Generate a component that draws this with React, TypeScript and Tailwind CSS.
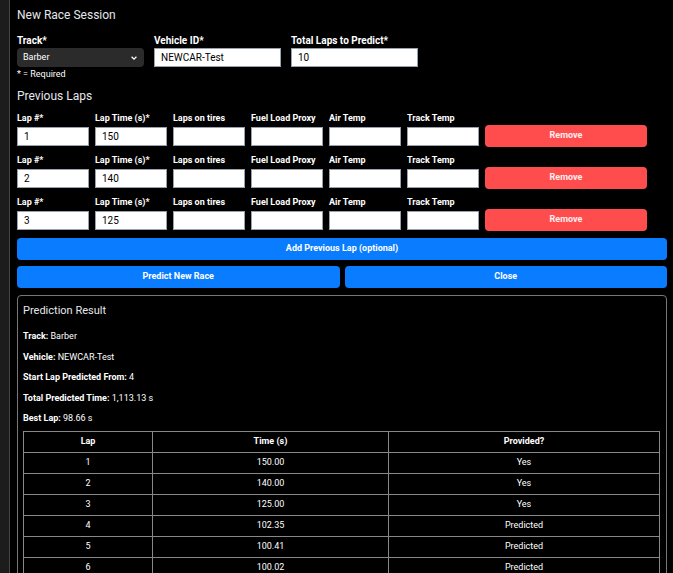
import React from "react";

const F = { fontFamily: "Roboto, 'Liberation Sans', sans-serif" };
const inp = "h-[19px] bg-white text-black text-[10px] px-1.5 border border-gray-400 outline-none";
const labels = ["Lap #*", "Lap Time (s)*", "Laps on tires", "Fuel Load Proxy", "Air Temp", "Track Temp"];
const laps = [["1", "150"], ["2", "140"], ["3", "125"]];
const rows = [
  ["1", "150.00", "Yes"], ["2", "140.00", "Yes"], ["3", "125.00", "Yes"],
  ["4", "102.35", "Predicted"], ["5", "100.41", "Predicted"], ["6", "100.02", "Predicted"],
];

export default function App() {
  return (
    <div className="flex w-[673px] h-[573px] overflow-hidden bg-black text-white" style={F}>
      <div className="w-[10px] bg-[#1c1c1c] border-r border-[#444]" />
      <div className="flex-1 pl-[7px] pr-[6px]">
        <div className="text-[12px] mt-[6px] text-gray-200">New Race Session</div>
        <div className="flex gap-[10px] mt-[9px]">
          {["Track*", "Vehicle ID*", "Total Laps to Predict*"].map((l, i) => (
            <div key={i} className="flex flex-col w-[127px]">
              <div className="text-[10px] font-bold h-[12px]">{l}</div>
              {i === 0 ? (
                <div className="mt-[3px] h-[19px] bg-[#2b2b2b] rounded flex items-center justify-between px-1.5 text-[9px]">
                  <span>Barber</span>
                  <svg width="8" height="8" viewBox="0 0 10 10"><path d="M2 3.5l3 3 3-3" stroke="white" strokeWidth="1.6" fill="none" /></svg>
                </div>
              ) : (
                <input readOnly value={i === 1 ? "NEWCAR-Test" : "10"} className={inp + " mt-[3px]"} />
              )}
            </div>
          ))}
        </div>
        <div className="text-[9px] mt-[1px]">* = Required</div>
        <div className="text-[12px] mt-[5px] text-gray-200">Previous Laps</div>
        <div className="flex flex-col mt-[7px] gap-[8px]">
          {laps.map(([a, b], r) => (
            <div key={r} className="flex items-end gap-[6px]">
              {labels.map((l, i) => (
                <div key={i} className="flex flex-col w-[72px]">
                  <div className="text-[9px] font-bold h-[12px]">{l}</div>
                  <input readOnly value={i === 0 ? a : i === 1 ? b : ""} className={inp + " mt-[3px]"} />
                </div>
              ))}
              <button className="w-[162px] h-[22px] mb-[-1px] rounded bg-[#ff4d4d] text-[9px] font-bold text-white/90">Remove</button>
            </div>
          ))}
        </div>
        <button className="mt-[8px] w-full h-[22px] rounded bg-[#0a7cff] text-[9px] font-bold">Add Previous Lap (optional)</button>
        <div className="flex gap-[5px] mt-[6px]">
          <button className="flex-1 h-[22px] rounded bg-[#0a7cff] text-[9px] font-bold">Predict New Race</button>
          <button className="flex-1 h-[22px] rounded bg-[#0a7cff] text-[9px] font-bold">Close</button>
        </div>
        <div className="mt-[7px] border border-[#777] rounded px-[5px] pb-4 text-[9px]">
          <div className="text-[11px] mt-[7px] text-gray-200">Prediction Result</div>
          <div className="mt-[11px] flex flex-col gap-[8px]">
            {[["Track:", "Barber"], ["Vehicle:", "NEWCAR-Test"], ["Start Lap Predicted From:", "4"], ["Total Predicted Time:", "1,113.13 s"], ["Best Lap:", "98.66 s"]].map(([k, v]) => (
              <div key={k} className="h-[12.5px]"><b>{k}</b> {v}</div>
            ))}
          </div>
          <table className="mt-[6px] w-[637px] border-collapse text-center">
            <thead>
              <tr className="h-[21px]">
                <th className="border border-[#888] w-[129px] font-bold">Lap</th>
                <th className="border border-[#888] w-[236px] font-bold">Time (s)</th>
                <th className="border border-[#888] font-bold">Provided?</th>
              </tr>
            </thead>
            <tbody>
              {rows.map(r => (
                <tr key={r[0]} className="h-[21px]">
                  {r.map((c, i) => <td key={i} className="border border-[#888]">{c}</td>)}
                </tr>
              ))}
            </tbody>
          </table>
        </div>
      </div>
    </div>
  );
}
